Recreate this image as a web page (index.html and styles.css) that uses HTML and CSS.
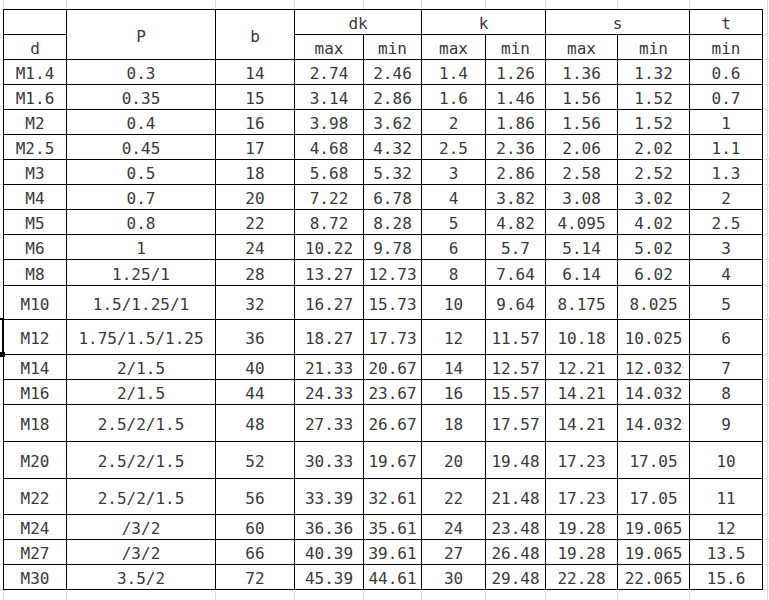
FILE: index.html
```html
<!DOCTYPE html>
<html lang="zh">
<head>
<meta charset="utf-8">
<title>螺钉尺寸表</title>
<link rel="stylesheet" href="styles.css">
</head>
<body>
<div class="sheet">
  <table class="spec">
    <colgroup>
      <col class="c63"><col class="c149"><col class="c79"><col class="c69"><col class="c58"><col class="c64"><col class="c60"><col class="c72"><col class="c72"><col class="c73">
    </colgroup>
    <tr class="r25"><td></td><td rowspan="2">P</td><td rowspan="2">b</td><td colspan="2">dk</td><td colspan="2">k</td><td colspan="2">s</td><td>t</td></tr>
    <tr class="r25"><td>d</td><td>max</td><td>min</td><td>max</td><td>min</td><td>max</td><td>min</td><td>min</td></tr>
    <tr class="r25"><td>M1.4</td><td>0.3</td><td>14</td><td>2.74</td><td>2.46</td><td>1.4</td><td>1.26</td><td>1.36</td><td>1.32</td><td>0.6</td></tr>
    <tr class="r25"><td>M1.6</td><td>0.35</td><td>15</td><td>3.14</td><td>2.86</td><td>1.6</td><td>1.46</td><td>1.56</td><td>1.52</td><td>0.7</td></tr>
    <tr class="r25"><td>M2</td><td>0.4</td><td>16</td><td>3.98</td><td>3.62</td><td>2</td><td>1.86</td><td>1.56</td><td>1.52</td><td>1</td></tr>
    <tr class="r25"><td>M2.5</td><td>0.45</td><td>17</td><td>4.68</td><td>4.32</td><td>2.5</td><td>2.36</td><td>2.06</td><td>2.02</td><td>1.1</td></tr>
    <tr class="r25"><td>M3</td><td>0.5</td><td>18</td><td>5.68</td><td>5.32</td><td>3</td><td>2.86</td><td>2.58</td><td>2.52</td><td>1.3</td></tr>
    <tr class="r25"><td>M4</td><td>0.7</td><td>20</td><td>7.22</td><td>6.78</td><td>4</td><td>3.82</td><td>3.08</td><td>3.02</td><td>2</td></tr>
    <tr class="r25"><td>M5</td><td>0.8</td><td>22</td><td>8.72</td><td>8.28</td><td>5</td><td>4.82</td><td>4.095</td><td>4.02</td><td>2.5</td></tr>
    <tr class="r25"><td>M6</td><td>1</td><td>24</td><td>10.22</td><td>9.78</td><td>6</td><td>5.7</td><td>5.14</td><td>5.02</td><td>3</td></tr>
    <tr class="r26"><td>M8</td><td>1.25/1</td><td>28</td><td>13.27</td><td>12.73</td><td>8</td><td>7.64</td><td>6.14</td><td>6.02</td><td>4</td></tr>
    <tr class="r34"><td>M10</td><td>1.5/1.25/1</td><td>32</td><td>16.27</td><td>15.73</td><td>10</td><td>9.64</td><td>8.175</td><td>8.025</td><td>5</td></tr>
    <tr class="r35"><td>M12</td><td>1.75/1.5/1.25</td><td>36</td><td>18.27</td><td>17.73</td><td>12</td><td>11.57</td><td>10.18</td><td>10.025</td><td>6</td></tr>
    <tr class="r25"><td>M14</td><td>2/1.5</td><td>40</td><td>21.33</td><td>20.67</td><td>14</td><td>12.57</td><td>12.21</td><td>12.032</td><td>7</td></tr>
    <tr class="r25"><td>M16</td><td>2/1.5</td><td>44</td><td>24.33</td><td>23.67</td><td>16</td><td>15.57</td><td>14.21</td><td>14.032</td><td>8</td></tr>
    <tr class="r37"><td>M18</td><td>2.5/2/1.5</td><td>48</td><td>27.33</td><td>26.67</td><td>18</td><td>17.57</td><td>14.21</td><td>14.032</td><td>9</td></tr>
    <tr class="r37"><td>M20</td><td>2.5/2/1.5</td><td>52</td><td>30.33</td><td>19.67</td><td>20</td><td>19.48</td><td>17.23</td><td>17.05</td><td>10</td></tr>
    <tr class="r36"><td>M22</td><td>2.5/2/1.5</td><td>56</td><td>33.39</td><td>32.61</td><td>22</td><td>21.48</td><td>17.23</td><td>17.05</td><td>11</td></tr>
    <tr class="r25"><td>M24</td><td>/3/2</td><td>60</td><td>36.36</td><td>35.61</td><td>24</td><td>23.48</td><td>19.28</td><td>19.065</td><td>12</td></tr>
    <tr class="r25"><td>M27</td><td>/3/2</td><td>66</td><td>40.39</td><td>39.61</td><td>27</td><td>26.48</td><td>19.28</td><td>19.065</td><td>13.5</td></tr>
    <tr class="r25"><td>M30</td><td>3.5/2</td><td>72</td><td>45.39</td><td>44.61</td><td>30</td><td>29.48</td><td>22.28</td><td>22.065</td><td>15.6</td></tr>
  </table>
  <div class="sel-line"></div>
  <div class="sel-tick"></div>
  <div class="sel-handle"></div>
</div>
</body>
</html>
```
FILE: styles.css
```css
html, body {
  margin: 0;
  padding: 0;
  background: #fff;
}

.sheet {
  position: relative;
  width: 769px;
  height: 600px;
  box-sizing: border-box;
  padding: 9px 0 0 3px;
  overflow: hidden;
  background-color: #fff;
  background-image:
    linear-gradient(to right,
      transparent 0 3px, #d9d9d9 3px 4px,
      transparent 4px 66px, #d9d9d9 66px 67px,
      transparent 67px 215px, #d9d9d9 215px 216px,
      transparent 216px 294px, #d9d9d9 294px 295px,
      transparent 295px 363px, #d9d9d9 363px 364px,
      transparent 364px 421px, #d9d9d9 421px 422px,
      transparent 422px 485px, #d9d9d9 485px 486px,
      transparent 486px 545px, #d9d9d9 545px 546px,
      transparent 546px 617px, #d9d9d9 617px 618px,
      transparent 618px 689px, #d9d9d9 689px 690px,
      transparent 690px 767px, #d9d9d9 767px 768px,
      transparent 768px),
    linear-gradient(to bottom,
      transparent 0 34px, #d9d9d9 34px 35px,
      transparent 35px 59px, #d9d9d9 59px 60px,
      transparent 60px 84px, #d9d9d9 84px 85px,
      transparent 85px 109px, #d9d9d9 109px 110px,
      transparent 110px 134px, #d9d9d9 134px 135px,
      transparent 135px 159px, #d9d9d9 159px 160px,
      transparent 160px 184px, #d9d9d9 184px 185px,
      transparent 185px 209px, #d9d9d9 209px 210px,
      transparent 210px 234px, #d9d9d9 234px 235px,
      transparent 235px 259px, #d9d9d9 259px 260px,
      transparent 260px 285px, #d9d9d9 285px 286px,
      transparent 286px 319px, #d9d9d9 319px 320px,
      transparent 320px 354px, #d9d9d9 354px 355px,
      transparent 355px 379px, #d9d9d9 379px 380px,
      transparent 380px 404px, #d9d9d9 404px 405px,
      transparent 405px 441px, #d9d9d9 441px 442px,
      transparent 442px 478px, #d9d9d9 478px 479px,
      transparent 479px 514px, #d9d9d9 514px 515px,
      transparent 515px 539px, #d9d9d9 539px 540px,
      transparent 540px 564px, #d9d9d9 564px 565px,
      transparent 565px 589px, #d9d9d9 589px 590px,
      transparent 590px);
}

.spec {
  table-layout: fixed;
  border-collapse: collapse;
  width: 760px;
  background: #fff;
  font-family: "DejaVu Sans Mono", "Liberation Mono", monospace;
  font-size: 16px;
  color: #3a3a3a;
}

.spec td {
  border: 1px solid #000;
  padding: 4px 0 0;
  text-align: center;
  vertical-align: middle;
  line-height: 18px;
  white-space: nowrap;
  overflow: hidden;
}

.c63 { width: 63px; }
.c149 { width: 149px; }
.c79 { width: 79px; }
.c69 { width: 69px; }
.c58 { width: 58px; }
.c64 { width: 64px; }
.c60 { width: 60px; }
.c72 { width: 72px; }
.c73 { width: 73px; }

.r25 { height: 25px; }
.r26 { height: 26px; }
.r34 { height: 34px; }
.r35 { height: 35px; }
.r36 { height: 36px; }
.r37 { height: 37px; }

.sel-line {
  position: absolute;
  left: 2px;
  top: 318px;
  width: 2px;
  height: 38px;
  background: #000;
}

.sel-tick {
  position: absolute;
  left: 0;
  top: 318px;
  width: 4px;
  height: 2px;
  background: #000;
}

.sel-handle {
  position: absolute;
  left: 0;
  top: 352px;
  width: 5px;
  height: 5px;
  background: #000;
}
```
